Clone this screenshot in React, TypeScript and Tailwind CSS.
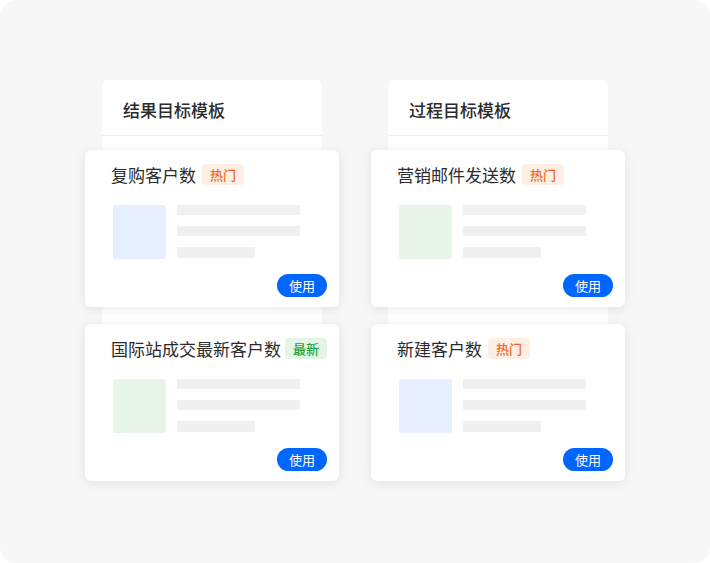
import React from "react";

type Tag = "hot" | "new";

interface Template {
  title: string;
  tag: Tag;
  tone: "blue" | "green";
}

const columns: { heading: string; items: Template[] }[] = [
  {
    heading: "结果目标模板",
    items: [
      { title: "复购客户数", tag: "hot", tone: "blue" },
      { title: "国际站成交最新客户数", tag: "new", tone: "green" },
    ],
  },
  {
    heading: "过程目标模板",
    items: [
      { title: "营销邮件发送数", tag: "hot", tone: "green" },
      { title: "新建客户数", tag: "hot", tone: "blue" },
    ],
  },
];

const font = { fontFamily: '"Noto Sans CJK SC", "Noto Sans", sans-serif' };

function Badge({ tag }: { tag: Tag }) {
  return tag === "hot" ? (
    <span className="ml-[6px] shrink-0 whitespace-nowrap h-[21px] px-[8px] rounded-[4px] bg-[#ffeee3] text-[#ee6a1f] text-[13px] leading-[21px] font-medium">
      热门
    </span>
  ) : (
    <span className="ml-[4px] shrink-0 whitespace-nowrap h-[21px] px-[8px] rounded-[4px] bg-[#e3f6e5] text-[#27a43a] text-[13px] leading-[21px] font-medium">
      最新
    </span>
  );
}

function Card({ item }: { item: Template }) {
  return (
    <div className="w-[254px] h-[157px] bg-white rounded-[6px] shadow-[0_2px_12px_rgba(0,0,0,0.09)] flex flex-col pt-[14px] pl-[26px] pr-[12px] pb-[10px]">
      <div className="flex items-center h-[21px] w-max">
        <span className="text-[17px] leading-[21px] text-[#2b2b2b] whitespace-nowrap">{item.title}</span>
        <Badge tag={item.tag} />
      </div>
      <div className="flex mt-[20px] ml-[2px]">
        <div
          className={
            item.tone === "blue"
              ? "w-[53px] h-[54px] rounded-[3px] bg-[#e6efff]"
              : "w-[53px] h-[54px] rounded-[3px] bg-[#e8f6ea]"
          }
        />
        <div className="ml-[11px] flex flex-col gap-[11px]">
          <div className="w-[123px] h-[10px] bg-[#f0f0f0]" />
          <div className="w-[123px] h-[10px] bg-[#f0f0f0]" />
          <div className="w-[78px] h-[11px] bg-[#f0f0f0]" />
        </div>
      </div>
      <div className="flex justify-end mt-[15px]">
        <button className="w-[50px] h-[23px] rounded-full bg-[#0066ff] text-white text-[13px] leading-[23px]">
          使用
        </button>
      </div>
    </div>
  );
}

export default function App() {
  return (
    <div className="w-[710px] h-[563px] bg-white" style={font}>
      <div className="w-full h-full rounded-[16px] bg-[#f7f7f7] flex justify-center gap-[32px] pt-[80px]">
        {columns.map((col) => (
          <div key={col.heading} className="relative w-[254px]">
            {/* backdrop panel */}
            <div className="absolute left-[17px] top-0 w-[220px] h-[320px] bg-white rounded-t-[6px] flex flex-col">
              <div className="h-[56px] pl-[21px] flex items-center pt-[4px] border-b border-[#ededed]">
                <span className="text-[17px] font-medium text-[#2b2b2b]">{col.heading}</span>
              </div>
            </div>
            <div className="relative flex flex-col gap-[17px] pt-[70px]">
              {col.items.map((item) => (
                <Card key={item.title} item={item} />
              ))}
            </div>
          </div>
        ))}
      </div>
    </div>
  );
}
